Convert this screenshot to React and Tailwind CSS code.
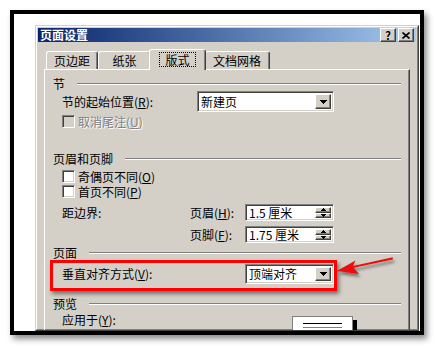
import React from 'react'

const raised =
  'border border-t-white border-l-white border-r-[#404040] border-b-[#404040] shadow-[inset_-1px_-1px_0_#808080,inset_1px_1px_0_#d4d0c8] bg-[#d4d0c8]'
const sunken =
  'border border-t-[#808080] border-l-[#808080] border-r-white border-b-white shadow-[inset_1px_1px_0_#404040,inset_-1px_-1px_0_#d4d0c8]'

function DownArrow() {
  return (
    <svg width="7" height="4" viewBox="0 0 7 4" shapeRendering="crispEdges">
      <rect x="0" y="0" width="7" height="1" fill="#000" />
      <rect x="1" y="1" width="5" height="1" fill="#000" />
      <rect x="2" y="2" width="3" height="1" fill="#000" />
      <rect x="3" y="3" width="1" height="1" fill="#000" />
    </svg>
  )
}

function Combo({ value, className }) {
  return (
    <div className={`${sunken} ${className} bg-white flex items-center p-[2px]`}>
      <span className="flex-1 pl-[1px] leading-none">{value}</span>
      <div className={`${raised} w-[16px] h-full flex items-center justify-center`}>
        <DownArrow />
      </div>
    </div>
  )
}

function SpinArrow({ up }) {
  return (
    <svg width="5" height="3" viewBox="0 0 5 3" shapeRendering="crispEdges">
      {up ? (
        <>
          <rect x="2" y="0" width="1" height="1" fill="#000" />
          <rect x="1" y="1" width="3" height="1" fill="#000" />
          <rect x="0" y="2" width="5" height="1" fill="#000" />
        </>
      ) : (
        <>
          <rect x="0" y="0" width="5" height="1" fill="#000" />
          <rect x="1" y="1" width="3" height="1" fill="#000" />
          <rect x="2" y="2" width="1" height="1" fill="#000" />
        </>
      )}
    </svg>
  )
}

function Spin({ value }) {
  return (
    <div className={`${sunken} w-[89px] h-[17px] bg-white flex items-center p-[2px]`}>
      <span className="flex-1 pl-[1px] leading-none">{value}</span>
      <div className="w-[16px] h-full flex flex-col">
        <div className={`${raised} flex-1 flex items-center justify-center`}>
          <SpinArrow up />
        </div>
        <div className={`${raised} flex-1 flex items-center justify-center`}>
          <SpinArrow />
        </div>
      </div>
    </div>
  )
}

function Check({ label, disabled }) {
  return (
    <div className="flex items-center h-[13px] pl-[17px]">
      <div className={`${sunken} w-[13px] h-[13px] ${disabled ? 'bg-[#d4d0c8]' : 'bg-white'}`} />
      <span
        className={`ml-[3px] leading-none ${
          disabled ? 'text-[#808080] [text-shadow:1px_1px_0_#fff]' : ''
        }`}
      >
        {label}
      </span>
    </div>
  )
}

function Group({ label, className = '' }) {
  return (
    <div className={`flex items-center h-[14px] pl-[8px] pr-[8px] ${className}`}>
      <span className="leading-none">{label}</span>
      <div className="flex-1 ml-[12px] h-[2px] border-t border-t-[#808080] border-b border-b-white" />
    </div>
  )
}

function Tab({ label, width, selected }) {
  if (selected) {
    return (
      <div
        className={`relative z-10 -mx-[2px] -mb-[1px] h-[21px] ${width} bg-[#d4d0c8] border-t border-l border-t-white border-l-white border-r border-r-[#404040] shadow-[inset_-1px_0_0_#808080] rounded-t-[3px] flex items-start justify-center pt-[2px]`}
      >
        <span className="border border-dotted border-black px-[5px] h-[15px] flex items-center leading-none">
          {label}
        </span>
      </div>
    )
  }
  return (
    <div
      className={`h-[18px] ${width} border-t border-l border-t-white border-l-white border-r border-r-[#404040] shadow-[inset_-1px_0_0_#808080] rounded-t-[3px] flex items-center justify-center leading-none`}
    >
      {label}
    </div>
  )
}

function RedArrow() {
  return (
    <svg
      width="64"
      height="30"
      viewBox="0 0 64 30"
      className="absolute left-[290px] -top-[10px] overflow-visible"
    >
      <defs>
        <filter id="sh" x="-20%" y="-40%" width="160%" height="200%">
          <feDropShadow dx="1.5" dy="3" stdDeviation="1.5" floodColor="#000" floodOpacity="0.45" />
        </filter>
      </defs>
      <g filter="url(#sh)">
        <polygon points="1.7,17 24,20 18.5,13.8 58,5.4 57.6,3.3 18,12 20.5,6.5" fill="#ee1111" />
      </g>
    </svg>
  )
}

export default function App() {
  return (
    <div
      className="w-[435px] h-[347px] bg-white overflow-hidden pt-[10px] pl-[10px] text-[12px] text-black"
      style={{ fontFamily: '"Noto Sans CJK SC", "Liberation Sans", sans-serif' }}
    >
      <div className="w-[414px] h-[325px] border-[4px] border-black bg-white shadow-[3px_4px_6px_rgba(0,0,0,0.45)]">
        {/* dialog */}
        <div className="ml-[21px] mt-[11px] w-[384px] h-[306px] overflow-hidden bg-[#d4d0c8] border border-t-[#d4d0c8] border-l-[#d4d0c8] border-r-[#404040] border-b-[#404040]">
          <div className="h-full border border-t-white border-l-white border-r-[#808080] border-b-[#808080] p-[1px] flex flex-col">
            {/* title bar */}
            <div className="h-[18px] flex items-center bg-gradient-to-r from-[#0a246a] to-[#a6caf0] pl-[2px] pr-[2px]">
              <span className="flex-1 text-white font-bold leading-none">页面设置</span>
              <div className={`${raised} w-[16px] h-[14px] flex items-center justify-center font-bold text-[11px] leading-none`}>
                ?
              </div>
              <div className={`${raised} ml-[2px] w-[16px] h-[14px] flex items-center justify-center`}>
                <svg width="8" height="7" viewBox="0 0 8 7">
                  <path d="M0.5 0.5 L7.5 6.5 M7.5 0.5 L0.5 6.5" stroke="#000" strokeWidth="1.6" />
                </svg>
              </div>
            </div>

            {/* body */}
            <div className="flex-1 flex flex-col px-[6px] pt-[7px]">
              <div className="flex items-end h-[20px] pl-[2px]">
                <Tab label="页边距" width="w-[52px]" />
                <Tab label="纸张" width="w-[53px]" />
                <Tab label="版式" width="w-[57px]" selected />
                <Tab label="文档网格" width="w-[66px]" />
              </div>

              <div className="flex-1 border-t border-l border-t-white border-l-white border-r border-r-[#404040] shadow-[inset_-1px_0_0_#808080] flex flex-col">
                <Group label="节" className="mt-[7px]" />

                <div className="flex items-center pl-[17px]">
                  <span className="w-[135px] leading-none">
                    节的起始位置(<u>R</u>):
                  </span>
                  <Combo value="新建页" className="w-[137px] h-[21px]" />
                </div>

                <div className="mt-[3px]">
                  <Check label={<>取消尾注(<u>U</u>)</>} disabled />
                </div>

                <Group label="页眉和页脚" className="mt-[24px]" />
                <div className="mt-[4px]">
                  <Check label={<>奇偶页不同(<u>O</u>)</>} />
                </div>
                <div className="mt-[2px]">
                  <Check label={<>首页不同(<u>P</u>)</>} />
                </div>

                <div className="mt-[6px] flex items-center pl-[17px]">
                  <span className="w-[128px] leading-none">距边界:</span>
                  <span className="w-[55px] leading-none">
                    页眉(<u>H</u>):
                  </span>
                  <Spin value="1.5 厘米" />
                </div>
                <div className="mt-[5px] flex items-center pl-[145px]">
                  <span className="w-[55px] leading-none">
                    页脚(<u>F</u>):
                  </span>
                  <Spin value="1.75 厘米" />
                </div>

                <Group label="页面" className="mt-[3px]" />

                <div className="relative mt-[4px] flex items-center pl-[17px]">
                  <span className="w-[183px] leading-none">
                    垂直对齐方式(<u>V</u>):
                  </span>
                  <Combo value="顶端对齐" className="w-[89px] h-[20px]" />
                  <div className="absolute left-[5px] -top-[4px] w-[287px] h-[31px] border-[3px] border-[#f00] shadow-[2px_3px_4px_rgba(0,0,0,0.45)] pointer-events-none" />
                  <RedArrow />
                </div>

                <Group label="预览" className="mt-[13px]" />

                <div className="mt-[2px] flex items-start pl-[17px]">
                  <span className="w-[230px] h-[14px] flex items-center leading-none">
                    应用于(<u>Y</u>):
                  </span>
                  <div className="mt-[3px] w-[61px] h-[30px] bg-white border border-[#808080] shadow-[4px_4px_0_#000] pt-[6px] px-[10px]">
                    <div className="h-[1px] bg-black" />
                    <div className="mt-[3px] h-[1px] bg-[#808080]" />
                  </div>
                </div>
              </div>
            </div>
          </div>
        </div>
      </div>
    </div>
  )
}
